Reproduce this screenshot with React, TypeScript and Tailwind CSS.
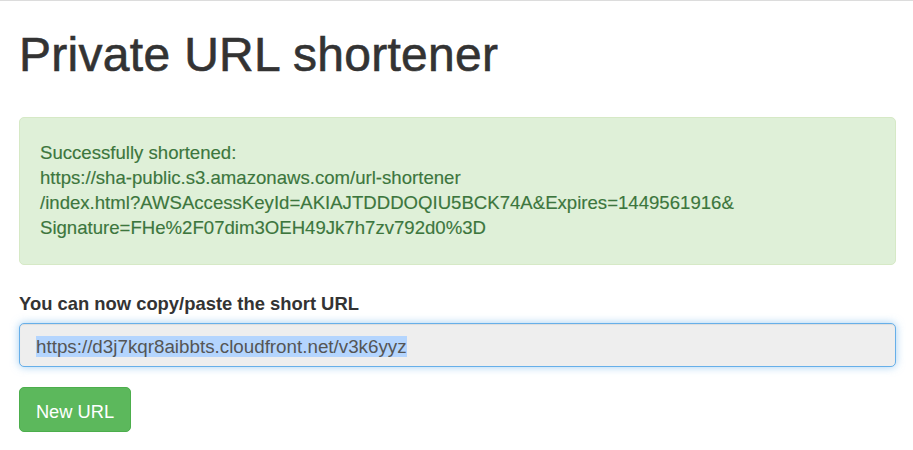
import React from "react";

export default function App() {
  return (
    <div
      className="min-h-[450px] w-full bg-white border-t border-[#dcdcdc] pl-[19px] pr-[17px]"
      style={{ fontFamily: '"Liberation Sans", Arial, Helvetica, sans-serif' }}
    >
      <h1 className="mt-[27px] text-[48px] leading-[53px] font-normal text-[#333333] tracking-[0.3px] [-webkit-text-stroke:0.6px_#333333]">
        Private URL shortener
      </h1>

      <div className="mt-[36px] h-[148px] rounded-[5px] border border-[#d6e9c6] bg-[#dff0d8] pl-[20px] pt-[22px] text-[18.6px] leading-[25px] text-[#3c763d] [-webkit-text-stroke:0.15px_#3c763d]">
        <div>Successfully shortened:</div>
        <div>https://sha-public.s3.amazonaws.com/url-shortener</div>
        <div>/index.html?AWSAccessKeyId=AKIAJTDDDOQIU5BCK74A&amp;Expires=1449561916&amp;</div>
        <div>Signature=FHe%2F07dim3OEH49Jk7h7zv792d0%3D</div>
      </div>

      <div className="mt-[26px] text-[18.4px] leading-[25px] font-bold text-[#333333]">
        You can now copy/paste the short URL
      </div>

      <div className="mt-[7px] flex h-[44px] items-center rounded-[5px] border border-[#66afe9] bg-[#eeeeee] pl-[16px] pt-[3px] text-[18.8px] text-[#555555] shadow-[inset_0_1px_1px_rgba(0,0,0,0.075),0_0_8px_rgba(102,175,233,0.6)]">
        <span className="bg-[#b4d5fe] leading-[21px]">
          https://d3j7kqr8aibbts.cloudfront.net/v3k6yyz
        </span>
      </div>

      <button className="mt-[20px] flex h-[45px] w-[112px] items-center justify-center rounded-[5px] border border-[#4cae4c] bg-[#5cb85c] pt-[3px] text-[18.3px] leading-[21px] text-white">
        New URL
      </button>
    </div>
  );
}
